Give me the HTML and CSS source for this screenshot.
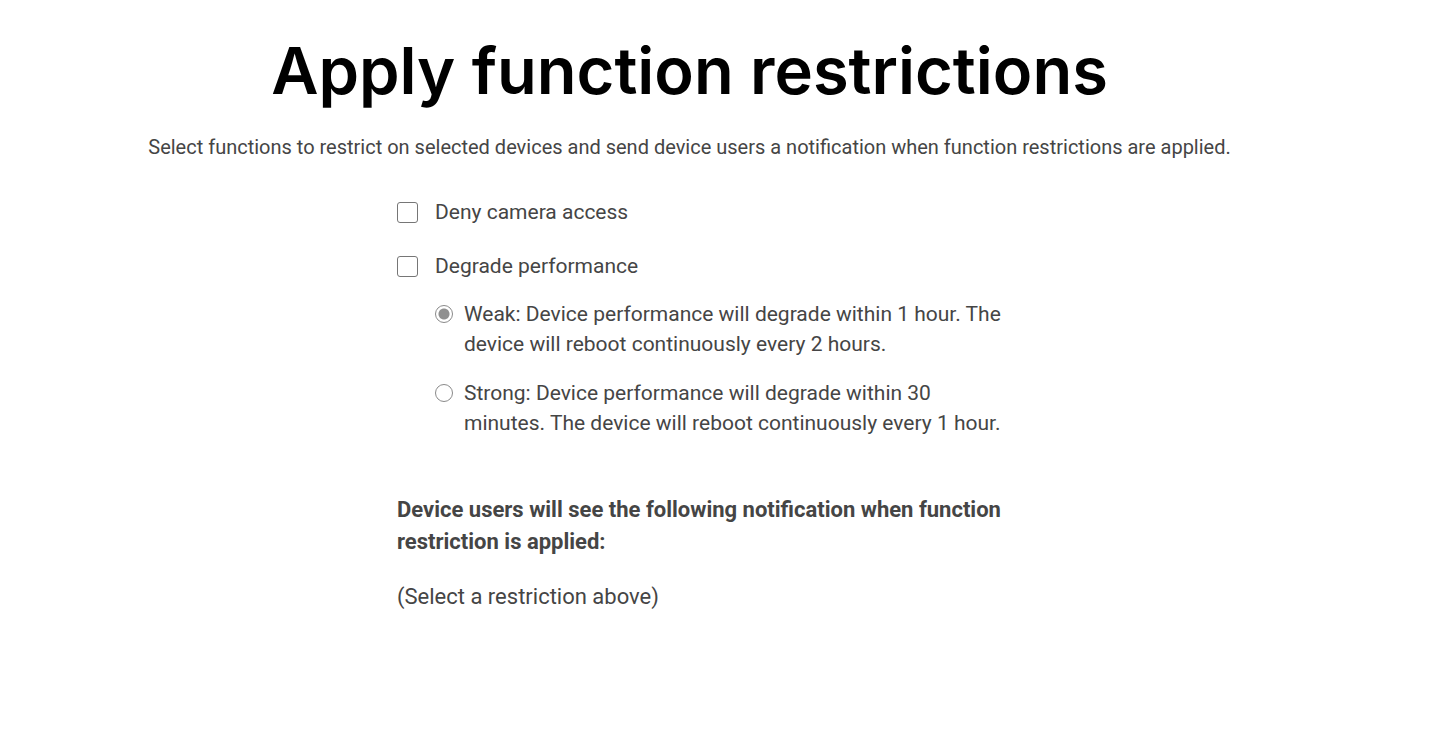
FILE: index.html
```html
<!DOCTYPE html>
<html lang="en">
<head>
<meta charset="utf-8">
<meta name="viewport" content="width=device-width, initial-scale=1">
<title>Apply function restrictions</title>
<link rel="stylesheet" href="styles.css">
</head>
<body>
<main class="page">
  <h1 class="title">Apply function restrictions</h1>
  <p class="intro">Select functions to restrict on selected devices and send device users a notification when function restrictions are applied.</p>
  <form class="form">
    <div class="checks">
      <label class="check-row"><input class="check" type="checkbox" name="camera"><span>Deny camera access</span></label>
      <label class="check-row"><input class="check" type="checkbox" name="performance"><span>Degrade performance</span></label>
    </div>
    <div class="levels" role="radiogroup" aria-label="Degrade performance">
      <label class="radio-row"><input class="radio" type="radio" name="level" value="weak" checked><span>Weak: Device performance will degrade within 1 hour. The device will reboot continuously every 2 hours.</span></label>
      <label class="radio-row"><input class="radio" type="radio" name="level" value="strong"><span>Strong: Device performance will degrade within 30 minutes. The device will reboot continuously every 1 hour.</span></label>
    </div>
    <h2 class="notice-title">Device users will see the following notification when function restriction is applied:</h2>
    <p class="notice">(Select a restriction above)</p>
  </form>
</main>
</body>
</html>
```
FILE: styles.css
```css
* { box-sizing: border-box; }
body {
  margin: 0;
  background: #fff;
  color: #454545;
  font-family: Roboto, "Liberation Sans", sans-serif;
  font-size: 21px;
  line-height: 30px;
}
.page {
  display: flex;
  flex-direction: column;
  align-items: center;
  padding: 29px 62px 32px 0;
}
.title {
  margin: 0;
  color: #000;
  font-family: Inter, sans-serif;
  font-size: 65px;
  font-weight: 600;
  line-height: 84px;
  text-align: center;
}
.intro {
  margin: 19px 0 0;
  font-size: 20px;
  text-align: center;
}
.form {
  width: 100%;
  max-width: 620px;
  margin: 35px 0 0 35px;
}
.checks {
  display: grid;
  gap: 24px;
}
.check-row {
  display: flex;
  align-items: center;
  gap: 17px;
}
.check, .radio {
  flex: none;
  appearance: none;
  margin: 0;
  background: #fff;
}
.check {
  width: 21px;
  height: 21px;
  border: 1px solid #767676;
  border-radius: 3px;
}
.check:checked { background: #767676; }
.levels {
  display: grid;
  gap: 19px;
  margin: 18px 0 0 38px;
}
.radio-row {
  display: flex;
  gap: 11px;
}
.radio {
  width: 18px;
  height: 18px;
  margin-top: 6px;
  border: 1px solid #8a8a8a;
  border-radius: 50%;
}
.radio:checked {
  background: radial-gradient(circle, #909090 5px, #fff 6px);
}
.notice-title {
  margin: 56px 0 0;
  font-size: 22px;
  font-weight: 700;
  line-height: 32px;
}
.notice {
  margin: 24px 0 0;
  font-size: 22px;
}
```
